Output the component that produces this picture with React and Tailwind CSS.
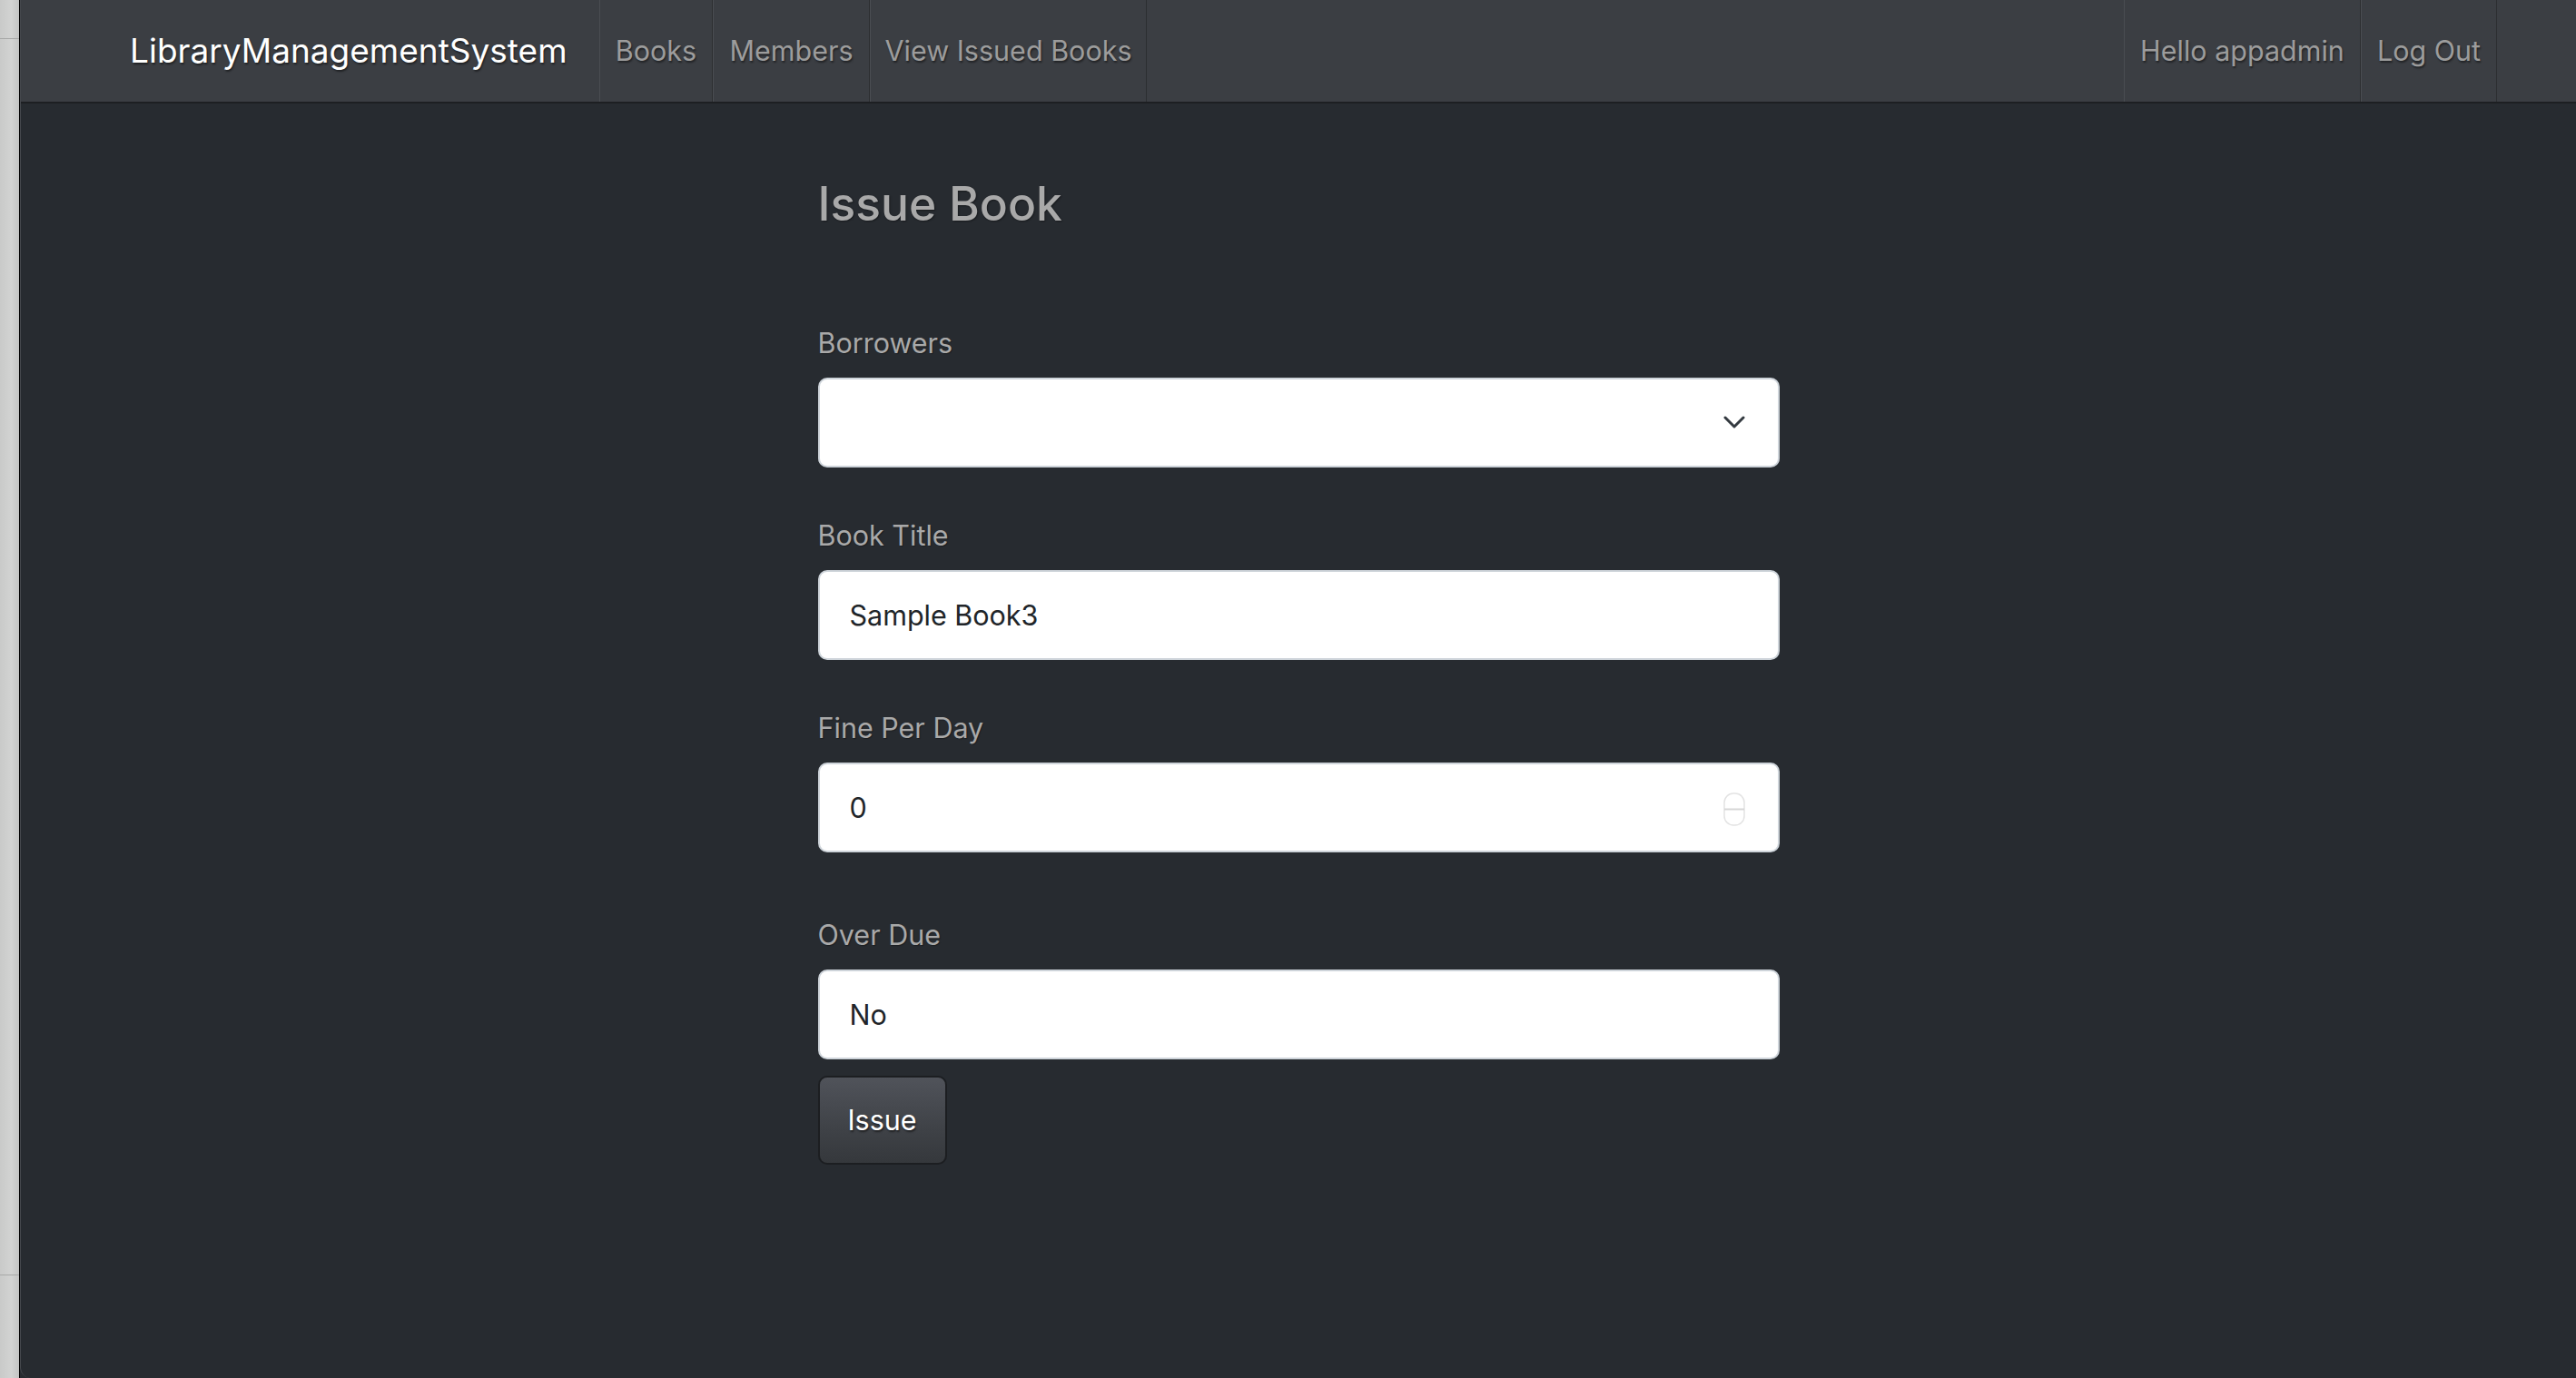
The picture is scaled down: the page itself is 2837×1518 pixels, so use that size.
import React from "react";

function NavItem({ w, children }) {
  return (
    <div
      className={`${w} flex items-center justify-center border-l border-r border-l-[rgba(255,255,255,0.08)] border-r-[rgba(0,0,0,0.25)] text-[30.5px] text-[#9c9c9c] [text-shadow:1px_2px_2px_rgba(0,0,0,0.45)]`}
    >
      {children}
    </div>
  );
}

function Label({ children }) {
  return (
    <div className="text-[30.5px] leading-[45px] text-[#a9a9a9] mb-[16px] [text-shadow:1px_1px_1px_rgba(0,0,0,0.3)]">
      {children}
    </div>
  );
}

function Field({ children }) {
  return (
    <div className="h-[99px] w-full rounded-[10px] border-2 border-[#ced4da] bg-white flex items-center pl-[33px] pr-[36px] text-[30.5px] text-[#212529]">
      {children}
    </div>
  );
}

export default function App() {
  return (
    <div className="flex w-[2837px] h-[1518px] overflow-hidden font-['Inter','Noto_Sans',sans-serif] bg-[#272b30]">
      {/* background window strip */}
      <div className="w-[21px] shrink-0 flex flex-col bg-[linear-gradient(to_right,#c9cac9,#d2d3d2_60%,#c3c4c3)]">
        <div className="h-[42px]" />
        <div className="h-px bg-[#a8a9a8]" />
        <div className="flex-1" />
        <div className="h-px bg-[#a8a9a8]" />
        <div className="h-[113px]" />
      </div>
      <div className="w-px shrink-0 bg-black" />
      <div className="flex-1 flex flex-col bg-[#272b30] rounded-bl-[12px] border-l border-[#45484d]">
        <nav className="h-[114px] shrink-0 flex items-stretch bg-[#3b3e43] border-b-2 border-[#1d1f22] pl-[120px] pr-[87px]">
          <div className="w-[517px] flex items-center text-[37px] text-white [text-shadow:1px_2px_2px_rgba(0,0,0,0.45)]">
            LibraryManagementSystem
          </div>
          <NavItem w="w-[125px]">Books</NavItem>
          <NavItem w="w-[173px]">Members</NavItem>
          <NavItem w="w-[305px]">View Issued Books</NavItem>
          <div className="flex-1" />
          <NavItem w="w-[261px]">Hello appadmin</NavItem>
          <NavItem w="w-[150px]">Log Out</NavItem>
        </nav>
        <main className="flex-1">
          <div className="w-[1059px] mx-auto pt-[78px]">
            <h2 className="text-[51.5px] leading-[65px] font-medium text-[#a9a9a9] [text-shadow:1px_1px_2px_rgba(0,0,0,0.4)]">
              Issue Book
            </h2>
            <div className="mt-[98px]">
              <Label>Borrowers</Label>
              <div className="h-[99px] w-full rounded-[10px] border-2 border-[#ced4da] bg-white flex items-center justify-end pr-[36px]">
                <svg width="24" height="15" viewBox="0 0 24 15" fill="none">
                  <polyline points="2,2 12,12 22,2" stroke="#343a40" strokeWidth="3" strokeLinecap="round" strokeLinejoin="round" />
                </svg>
              </div>
            </div>
            <div className="mt-[52px]">
              <Label>Book Title</Label>
              <Field>Sample Book3</Field>
            </div>
            <div className="mt-[52px]">
              <Label>Fine Per Day</Label>
              <Field>
                <span className="flex-1">0</span>
                <svg width="24" height="37" viewBox="0 0 24 37" fill="none" className="mt-[4px]">
                  <rect x="1" y="1" width="22" height="35" rx="10" stroke="#e3e3e3" strokeWidth="1.5" />
                  <line x1="1" y1="18.5" x2="23" y2="18.5" stroke="#d6d6d6" strokeWidth="2" />
                </svg>
              </Field>
            </div>
            <div className="mt-[68px]">
              <Label>Over Due</Label>
              <Field>No</Field>
            </div>
            <button className="mt-[18px] w-[142px] h-[98px] rounded-[10px] border-2 border-[#1c1e21] bg-[linear-gradient(#50535a,#3f4247_60%,#35383c)] text-white text-[30.5px] [text-shadow:1px_2px_2px_rgba(0,0,0,0.5)]">
              Issue
            </button>
          </div>
        </main>
      </div>
    </div>
  );
}
